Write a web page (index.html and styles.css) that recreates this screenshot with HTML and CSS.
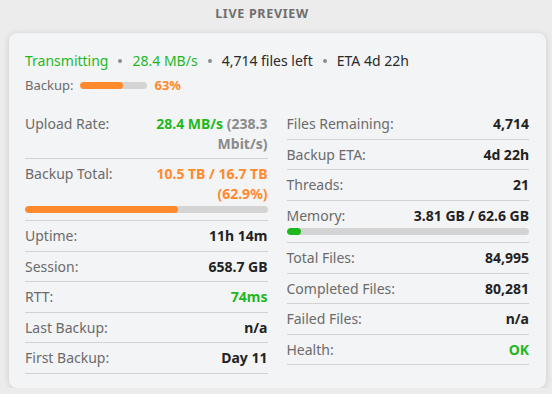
FILE: index.html
```html
<!DOCTYPE html>
<html lang="en">
<head>
  <meta charset="UTF-8" />
  <title>Live Preview</title>
  <link rel="stylesheet" href="styles.css">
</head>
<body>
  <h3 class="section-title">Live Preview</h3>
  <div class="card">
    <div class="status-line">
      <span class="green">Transmitting</span>
      <span class="dot"></span>
      <span class="green">28.4 MB/s</span>
      <span class="dot"></span>
      <span>4,714 files left</span>
      <span class="dot"></span>
      <span>ETA 4d 22h</span>
    </div>
    <div class="backup-line">
      <span>Backup:</span>
      <div class="mini-bar"><div class="fill orange-bg" style="width: 63%"></div></div>
      <strong class="orange">63%</strong>
    </div>

    <div class="stats">
      <div class="col">
        <div class="row">
          <div class="row-top">
            <span class="label">Upload Rate:</span>
            <span class="value"><span class="green">28.4 MB/s</span> <span class="muted">(238.3 Mbit/s)</span></span>
          </div>
        </div>
        <div class="row">
          <div class="row-top">
            <span class="label">Backup Total:</span>
            <span class="value orange">10.5 TB / 16.7 TB (62.9%)</span>
          </div>
          <div class="bar"><div class="fill orange-bg" style="width: 62.9%"></div></div>
        </div>
        <div class="row">
          <div class="row-top"><span class="label">Uptime:</span><span class="value">11h 14m</span></div>
        </div>
        <div class="row">
          <div class="row-top"><span class="label">Session:</span><span class="value">658.7 GB</span></div>
        </div>
        <div class="row">
          <div class="row-top"><span class="label">RTT:</span><span class="value green">74ms</span></div>
        </div>
        <div class="row">
          <div class="row-top"><span class="label">Last Backup:</span><span class="value">n/a</span></div>
        </div>
        <div class="row">
          <div class="row-top"><span class="label">First Backup:</span><span class="value">Day 11</span></div>
        </div>
      </div>

      <div class="col">
        <div class="row">
          <div class="row-top"><span class="label">Files Remaining:</span><span class="value">4,714</span></div>
        </div>
        <div class="row">
          <div class="row-top"><span class="label">Backup ETA:</span><span class="value">4d 22h</span></div>
        </div>
        <div class="row">
          <div class="row-top"><span class="label">Threads:</span><span class="value">21</span></div>
        </div>
        <div class="row">
          <div class="row-top"><span class="label">Memory:</span><span class="value">3.81 GB / 62.6 GB</span></div>
          <div class="bar"><div class="fill green-bg" style="width: 6%"></div></div>
        </div>
        <div class="row">
          <div class="row-top"><span class="label">Total Files:</span><span class="value">84,995</span></div>
        </div>
        <div class="row">
          <div class="row-top"><span class="label">Completed Files:</span><span class="value">80,281</span></div>
        </div>
        <div class="row">
          <div class="row-top"><span class="label">Failed Files:</span><span class="value">n/a</span></div>
        </div>
        <div class="row">
          <div class="row-top"><span class="label">Health:</span><span class="value green">OK</span></div>
        </div>
      </div>
    </div>
  </div>
</body>
</html>
```

FILE: styles.css
```css
body {
  font-family: 'Noto Sans', 'Open Sans', sans-serif;
  background-color: #ececec;
  margin: 0;
  padding: 0;
  color: #222;
}
.section-title {
  margin: 0;
  padding: 5px 28px 0 0;
  height: 28px;
  box-sizing: border-box;
  text-align: center;
  text-transform: uppercase;
  font-size: 12.5px;
  font-weight: 700;
  letter-spacing: 0.7px;
  color: #6e6e6e;
}
.card {
  margin: 5px 6px 0 9px;
  background: #f3f4f6;
  border-radius: 8px;
  box-shadow: 0 1px 6px rgba(0,0,0,0.15);
  padding: 18px 17px 14px 16px;
}
.green { color: #1fb81f; }
.orange { color: #ff8a2d; }
.muted { color: #8a8a8a; }
.green-bg { background: #1fb81f; }
.orange-bg { background: #ff8a2d; }

.status-line {
  display: flex;
  align-items: center;
  gap: 10px;
  font-size: 14px;
  line-height: 20px;
  color: #2a2a2a;
}
.status-line .dot {
  width: 4px;
  height: 4px;
  border-radius: 50%;
  background: #8c8c8c;
}
.backup-line {
  display: flex;
  align-items: center;
  gap: 7px;
  margin-top: 5px;
  font-size: 13px;
  line-height: 19px;
  color: #6b6b6b;
}
.mini-bar {
  width: 67px;
  height: 7px;
  border-radius: 4px;
  background: #d4d4d4;
  overflow: hidden;
}
.fill {
  height: 100%;
  border-radius: 4px;
}
.stats {
  display: grid;
  grid-template-columns: 1fr 1fr;
  column-gap: 19px;
  margin-top: 14px;
  align-items: start;
}
.row {
  border-bottom: 1px solid #d2d2d2;
  padding: 5px 0;
  font-size: 14px;
  line-height: 19.5px;
}
.row-top {
  display: flex;
  justify-content: space-between;
  gap: 12px;
}
.label {
  color: #6b6b6b;
  flex-shrink: 0;
}
.value {
  font-weight: 700;
  text-align: right;
  max-width: 60%;
}
.bar {
  height: 7px;
  border-radius: 4px;
  background: #d4d4d4;
  overflow: hidden;
  margin: 3px 0 2px;
}
```
